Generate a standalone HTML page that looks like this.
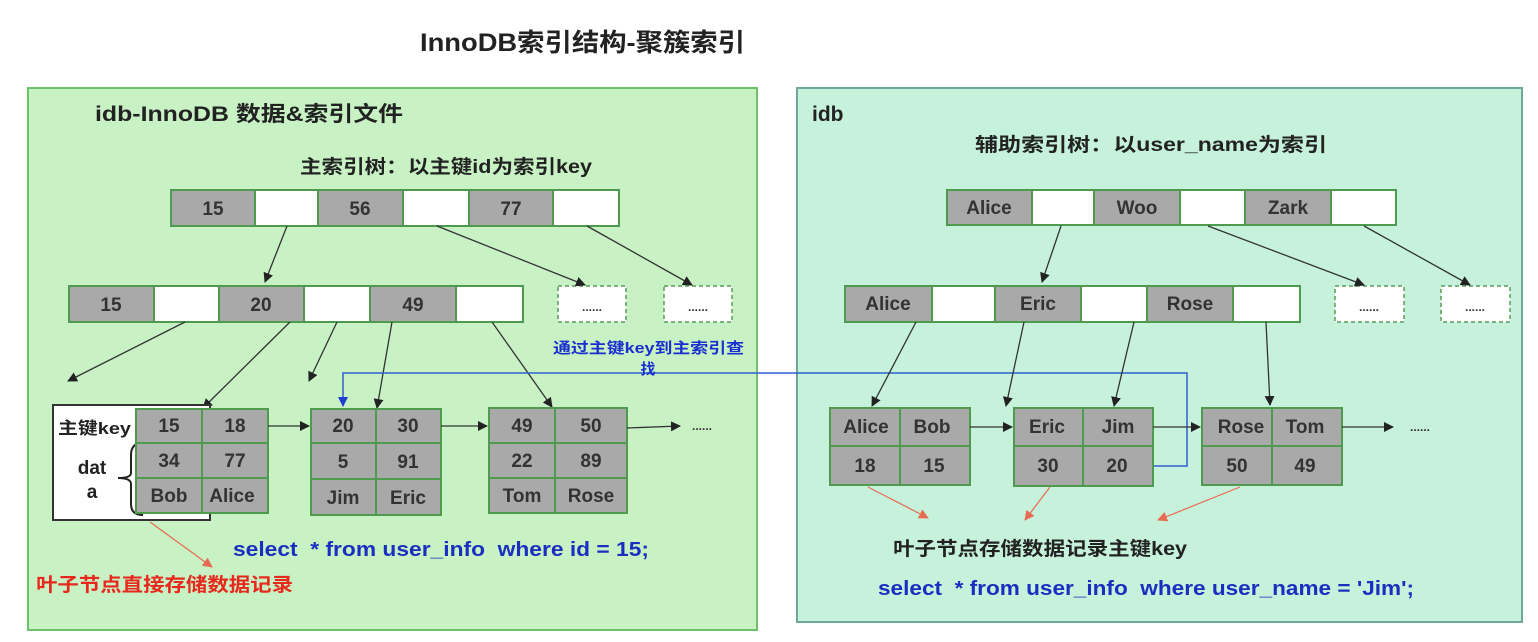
<!DOCTYPE html>
<html><head><meta charset="utf-8"><style>
html,body{margin:0;padding:0;background:#fff;width:1538px;height:642px;overflow:hidden}
svg{display:block}
text{font-family:"Liberation Sans","Noto Sans CJK SC",sans-serif;font-weight:bold}
.c{font-size:19px;fill:#333;text-anchor:middle}
.g{fill:#a9a9a9;stroke:#4e9a4e;stroke-width:2}
.w{fill:#fff;stroke:#4e9a4e;stroke-width:2}
.d{fill:#fff;stroke:#5a9a5a;stroke-width:1.5;stroke-dasharray:4 3}
.a{stroke:#333;stroke-width:1.3;fill:none;marker-end:url(#ar)}
.r{stroke:#e86a50;stroke-width:1.2;fill:none;marker-end:url(#rr)}
</style></head><body>
<svg width="1538" height="642" viewBox="0 0 1538 642">
<defs>
<marker id="ar" markerWidth="10" markerHeight="10" refX="9" refY="5" orient="auto" markerUnits="userSpaceOnUse"><path d="M0,0 L10,5 L0,10 z" fill="#222"/></marker>
<marker id="rr" markerWidth="10" markerHeight="10" refX="9" refY="5" orient="auto" markerUnits="userSpaceOnUse"><path d="M0,0 L10,5 L0,10 z" fill="#e86a50"/></marker>
<marker id="br" markerWidth="10" markerHeight="10" refX="9" refY="5" orient="auto" markerUnits="userSpaceOnUse"><path d="M0,0 L10,5 L0,10 z" fill="#1f3fd0"/></marker>
</defs>
<text x="420" y="51" style="font-size:25px" fill="#222" textLength="325" lengthAdjust="spacingAndGlyphs">InnoDB索引结构-聚簇索引</text>

<rect x="28" y="88" width="729" height="542" fill="#c8f2c4" stroke="#6fc06a" stroke-width="2"/>
<rect x="797" y="88" width="725" height="534" fill="#c6f2dc" stroke="#6fa89a" stroke-width="2"/>

<text x="95" y="121" style="font-size:21px" fill="#222" textLength="308" lengthAdjust="spacingAndGlyphs">idb-InnoDB 数据&amp;索引文件</text>
<text x="300" y="173" style="font-size:19px" fill="#222" textLength="292" lengthAdjust="spacingAndGlyphs">主索引树：以主键id为索引key</text>
<text x="812" y="121" style="font-size:21px" fill="#222">idb</text>
<text x="975" y="151" style="font-size:19px" fill="#222" textLength="352" lengthAdjust="spacingAndGlyphs">辅助索引树：以user_name为索引</text>

<rect class="g" x="171" y="190" width="84" height="36"/><rect class="w" x="255" y="190" width="63" height="36"/>
<rect class="g" x="318" y="190" width="85" height="36"/><rect class="w" x="403" y="190" width="66" height="36"/>
<rect class="g" x="469" y="190" width="84" height="36"/><rect class="w" x="553" y="190" width="66" height="36"/>
<text class="c" x="213" y="215">15</text><text class="c" x="360" y="215">56</text><text class="c" x="511" y="215">77</text>
<rect class="g" x="69" y="286" width="85" height="36"/><rect class="w" x="154" y="286" width="65" height="36"/>
<rect class="g" x="219" y="286" width="85" height="36"/><rect class="w" x="304" y="286" width="66" height="36"/>
<rect class="g" x="370" y="286" width="86" height="36"/><rect class="w" x="456" y="286" width="67" height="36"/>
<text class="c" x="111" y="311">15</text><text class="c" x="261" y="311">20</text><text class="c" x="413" y="311">49</text>
<rect class="d" x="558" y="286" width="68" height="36"/><rect class="d" x="664" y="286" width="68" height="36"/>
<text x="592" y="311" text-anchor="middle" style="font-size:12px" fill="#333">......</text>
<text x="698" y="311" text-anchor="middle" style="font-size:12px" fill="#333">......</text>

<path class="a" d="M287,226 L265,282"/>
<path class="a" d="M437,226 L585,285"/>
<path class="a" d="M587,226 L692,285"/>
<path class="a" d="M185,322 L68,381"/>
<path class="a" d="M290,322 L203,408"/>
<path class="a" d="M337,322 L309,381"/>
<path class="a" d="M392,322 L377,408"/>
<path class="a" d="M492,322 L552,407"/>

<rect x="53" y="405" width="157" height="115" fill="#fff" stroke="#333" stroke-width="2"/>
<text x="58" y="434" style="font-size:17px" fill="#222" textLength="73" lengthAdjust="spacingAndGlyphs">主键key</text>
<text x="92" y="474" text-anchor="middle" style="font-size:19px" fill="#222">dat</text>
<text x="92" y="498" text-anchor="middle" style="font-size:19px" fill="#222">a</text>
<path d="M143,443 Q131,443 131,455 L131,473 Q131,478 118,478 Q131,478 131,484 L131,504 Q131,515 143,515" stroke="#222" stroke-width="2" fill="none"/>
<rect class="g" x="136" y="409" width="66" height="34"/><rect class="g" x="202" y="409" width="66" height="34"/>
<rect class="g" x="136" y="443" width="66" height="35"/><rect class="g" x="202" y="443" width="66" height="35"/>
<rect class="g" x="136" y="478" width="66" height="35"/><rect class="g" x="202" y="478" width="66" height="35"/>
<text class="c" x="169" y="432">15</text><text class="c" x="235" y="432">18</text>
<text class="c" x="169" y="467">34</text><text class="c" x="235" y="467">77</text>
<text class="c" x="169" y="502">Bob</text><text class="c" x="232" y="502">Alice</text>

<rect class="g" x="311" y="409" width="65" height="34"/><rect class="g" x="376" y="409" width="65" height="34"/>
<rect class="g" x="311" y="443" width="65" height="36"/><rect class="g" x="376" y="443" width="65" height="36"/>
<rect class="g" x="311" y="479" width="65" height="36"/><rect class="g" x="376" y="479" width="65" height="36"/>
<text class="c" x="343" y="432">20</text><text class="c" x="408" y="432">30</text>
<text class="c" x="343" y="468">5</text><text class="c" x="408" y="468">91</text>
<text class="c" x="343" y="504">Jim</text><text class="c" x="408" y="504">Eric</text>

<rect class="g" x="489" y="408" width="66" height="35"/><rect class="g" x="555" y="408" width="72" height="35"/>
<rect class="g" x="489" y="443" width="66" height="35"/><rect class="g" x="555" y="443" width="72" height="35"/>
<rect class="g" x="489" y="478" width="66" height="35"/><rect class="g" x="555" y="478" width="72" height="35"/>
<text class="c" x="522" y="432">49</text><text class="c" x="591" y="432">50</text>
<text class="c" x="522" y="467">22</text><text class="c" x="591" y="467">89</text>
<text class="c" x="522" y="502">Tom</text><text class="c" x="591" y="502">Rose</text>

<path class="a" d="M268,426 L309,426"/>
<path class="a" d="M441,426 L487,426"/>
<path class="a" d="M627,428 L680,426"/>
<text x="692" y="430" style="font-size:12px" fill="#333">......</text>

<path class="r" d="M150,522 L212,567"/>
<text x="36" y="591" style="font-size:19px" fill="#e8281c" textLength="257" lengthAdjust="spacingAndGlyphs">叶子节点直接存储数据记录</text>
<text x="233" y="556" style="font-size:20px" fill="#1a2fc0" textLength="416" lengthAdjust="spacingAndGlyphs">select&#160; * from user_info&#160; where id = 15;</text>

<path d="M1154,466 L1187,466 L1187,373 L343,373 L343,406" stroke="#2f5fd0" stroke-width="1.5" fill="none" marker-end="url(#br)"/>
<text x="553" y="353" style="font-size:15px" fill="#1a2fd0" textLength="191" lengthAdjust="spacingAndGlyphs">通过主键key到主索引查</text>
<text x="648" y="374" text-anchor="middle" style="font-size:15px" fill="#1a2fd0">找</text>

<rect class="g" x="947" y="190" width="85" height="35"/><rect class="w" x="1032" y="190" width="62" height="35"/>
<rect class="g" x="1094" y="190" width="86" height="35"/><rect class="w" x="1180" y="190" width="65" height="35"/>
<rect class="g" x="1245" y="190" width="86" height="35"/><rect class="w" x="1331" y="190" width="65" height="35"/>
<text class="c" x="989" y="214">Alice</text><text class="c" x="1137" y="214">Woo</text><text class="c" x="1288" y="214">Zark</text>
<rect class="g" x="845" y="286" width="87" height="36"/><rect class="w" x="932" y="286" width="63" height="36"/>
<rect class="g" x="995" y="286" width="86" height="36"/><rect class="w" x="1081" y="286" width="66" height="36"/>
<rect class="g" x="1147" y="286" width="86" height="36"/><rect class="w" x="1233" y="286" width="67" height="36"/>
<text class="c" x="888" y="310">Alice</text><text class="c" x="1038" y="310">Eric</text><text class="c" x="1190" y="310">Rose</text>
<rect class="d" x="1335" y="286" width="69" height="36"/><rect class="d" x="1441" y="286" width="69" height="36"/>
<text x="1369" y="311" text-anchor="middle" style="font-size:12px" fill="#333">......</text>
<text x="1475" y="311" text-anchor="middle" style="font-size:12px" fill="#333">......</text>

<path class="a" d="M1061,226 L1042,282"/>
<path class="a" d="M1208,226 L1364,285"/>
<path class="a" d="M1364,226 L1470,285"/>
<path class="a" d="M916,322 L872,406"/>
<path class="a" d="M1024,322 L1006,406"/>
<path class="a" d="M1134,322 L1114,406"/>
<path class="a" d="M1266,322 L1270,405"/>

<rect class="g" x="830" y="408" width="70" height="38"/><rect class="g" x="900" y="408" width="70" height="38"/>
<rect class="g" x="830" y="446" width="70" height="39"/><rect class="g" x="900" y="446" width="70" height="39"/>
<text class="c" x="866" y="433">Alice</text><text class="c" x="932" y="433">Bob</text>
<text class="c" x="865" y="472">18</text><text class="c" x="934" y="472">15</text>
<rect class="g" x="1014" y="408" width="69" height="38"/><rect class="g" x="1083" y="408" width="70" height="38"/>
<rect class="g" x="1014" y="446" width="69" height="40"/><rect class="g" x="1083" y="446" width="70" height="40"/>
<text class="c" x="1047" y="433">Eric</text><text class="c" x="1118" y="433">Jim</text>
<text class="c" x="1048" y="472">30</text><text class="c" x="1117" y="472">20</text>
<rect class="g" x="1202" y="408" width="70" height="38"/><rect class="g" x="1272" y="408" width="70" height="38"/>
<rect class="g" x="1202" y="446" width="70" height="39"/><rect class="g" x="1272" y="446" width="70" height="39"/>
<text class="c" x="1241" y="433">Rose</text><text class="c" x="1305" y="433">Tom</text>
<text class="c" x="1237" y="472">50</text><text class="c" x="1305" y="472">49</text>

<path class="a" d="M970,427 L1012,427"/>
<path class="a" d="M1153,427 L1200,427"/>
<path class="a" d="M1342,427 L1393,427"/>
<text x="1410" y="431" style="font-size:12px" fill="#333">......</text>

<path class="r" d="M868,487 L928,518"/>
<path class="r" d="M1050,487 L1025,520"/>
<path class="r" d="M1240,487 L1158,520"/>
<text x="893" y="555" style="font-size:19px" fill="#222" textLength="294" lengthAdjust="spacingAndGlyphs">叶子节点存储数据记录主键key</text>
<text x="878" y="595" style="font-size:20px" fill="#1a2fc0" textLength="536" lengthAdjust="spacingAndGlyphs">select&#160; * from user_info&#160; where user_name = 'Jim';</text>
</svg>
</body></html>
